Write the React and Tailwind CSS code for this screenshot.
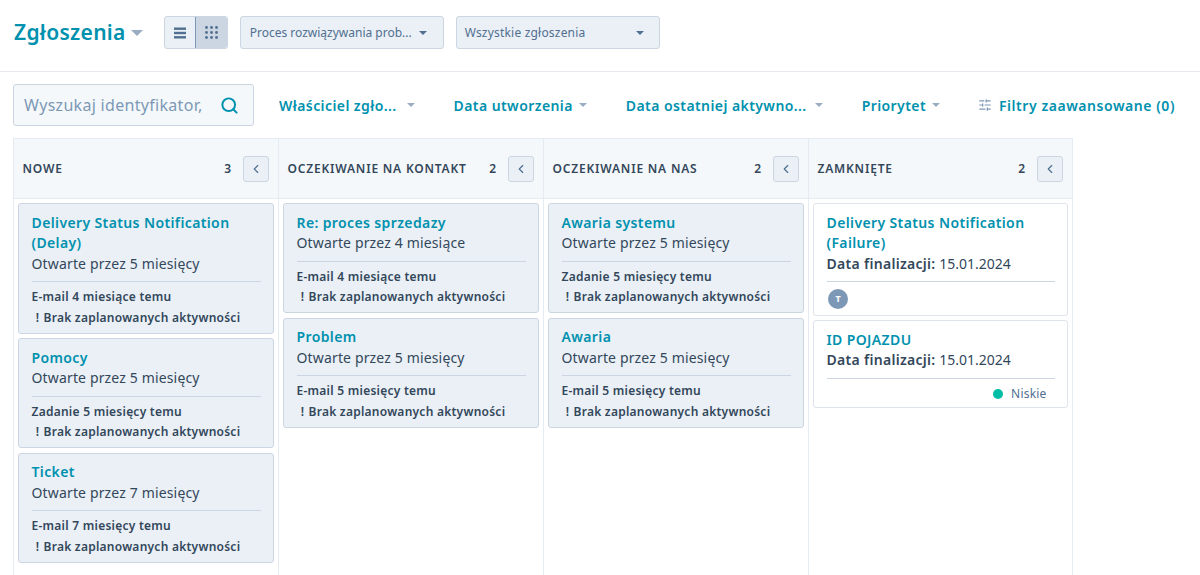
import { ChevronLeft, Search, SlidersHorizontal } from "lucide-react";

const font = { fontFamily: '"Noto Sans", sans-serif' };

const columns = [
  {
    name: "NOWE",
    count: 3,
    cards: [
      { title: ["Delivery Status Notification", "(Delay)"], open: "Otwarte przez 5 miesięcy", last: "E-mail 4 miesiące temu" },
      { title: ["Pomocy"], open: "Otwarte przez 5 miesięcy", last: "Zadanie 5 miesięcy temu" },
      { title: ["Ticket"], open: "Otwarte przez 7 miesięcy", last: "E-mail 7 miesięcy temu" },
    ],
  },
  {
    name: "OCZEKIWANIE NA KONTAKT",
    count: 2,
    cards: [
      { title: ["Re: proces sprzedazy"], open: "Otwarte przez 4 miesiące", last: "E-mail 4 miesiące temu" },
      { title: ["Problem"], open: "Otwarte przez 5 miesięcy", last: "E-mail 5 miesięcy temu" },
    ],
  },
  {
    name: "OCZEKIWANIE NA NAS",
    count: 2,
    cards: [
      { title: ["Awaria systemu"], open: "Otwarte przez 5 miesięcy", last: "Zadanie 5 miesięcy temu" },
      { title: ["Awaria"], open: "Otwarte przez 5 miesięcy", last: "E-mail 5 miesięcy temu" },
    ],
  },
];

function Caret({ className }) {
  return <span className={"inline-block w-0 h-0 border-x-[4.5px] border-x-transparent border-t-[4.5px] " + className} />;
}

function Filter({ label, className, gap }) {
  return (
    <div className={"flex items-center text-[14px] font-semibold tracking-[0.42px] text-[#0091ae] " + className}>
      <span className={"whitespace-nowrap " + gap}>{label}</span>
      <Caret className="border-t-[#99acc2]" />
    </div>
  );
}

function ColumnHeader({ name, count }) {
  return (
    <div className="h-[60px] flex items-center bg-[#f5f8fa] border-b border-[#e5ebf2] pl-[8.5px] pr-[9px]">
      <span className="text-[12px] font-semibold text-[#33475b] tracking-[0.8px] whitespace-nowrap">{name}</span>
      <span className="ml-auto text-[12px] font-semibold text-[#33475b]">{count}</span>
      <button className="ml-[12px] w-[26px] h-[26px] flex items-center justify-center rounded-[3px] bg-[#eaf0f6] border border-[#cbd6e2] text-[#516f90]">
        <ChevronLeft size={14} strokeWidth={2} />
      </button>
    </div>
  );
}

function OpenCard({ card }) {
  return (
    <div className="bg-[#eaf0f6] border border-[#cbd6e2] rounded-[3px] px-[12.5px] pt-[8.5px] pb-[4.5px]">
      {card.title.map((t) => (
        <div key={t} className="text-[14px] leading-[20.5px] font-semibold tracking-[0.38px] text-[#0091ae]">{t}</div>
      ))}
      <div className="text-[14px] leading-[20.5px] tracking-[0.15px] text-[#33475b]">{card.open}</div>
      <div className="border-t border-[#cbd6e2] mt-[7px] pt-[5px] text-[12px] font-semibold tracking-[0.25px] text-[#33475b]">
        <div className="leading-[20.5px]">{card.last}</div>
        <div className="leading-[20.5px] flex">
          <span className="w-[12px] text-center">!</span>
          <span>Brak zaplanowanych aktywności</span>
        </div>
      </div>
    </div>
  );
}

function ClosedCard({ title, children }) {
  return (
    <div className="bg-white border border-[#dfe3eb] rounded-[3px] px-[12.5px] pt-[8.5px]">
      {title.map((t) => (
        <div key={t} className="text-[14px] leading-[20.5px] font-semibold tracking-[0.38px] text-[#0091ae]">{t}</div>
      ))}
      <div className="text-[14px] leading-[20.5px] text-[#33475b]">
        <span className="font-semibold tracking-[0.3px]">Data finalizacji:</span> 15.01.2024
      </div>
      <div className="border-t border-[#cbd6e2] mt-[7px]">{children}</div>
    </div>
  );
}

export default function App() {
  return (
    <div className="w-[1200px] h-[575px] overflow-hidden bg-white" style={font}>
      <div className="h-[72px] border-b border-[#e5e8ed] flex items-start pt-[16px] pl-[14px]">
        <div className="h-[33px] flex items-center">
          <span className="text-[21px] font-semibold text-[#0091ae] tracking-[0.3px]">Zgłoszenia</span>
          <Caret className="ml-[5px] !border-x-[6px] !border-t-[6px] border-t-[#99acc2]" />
        </div>
        <div className="ml-[21px] flex h-[33px] rounded-[3px] border border-[#cbd6e2] bg-[#eaf0f6]">
          <div className="w-[30px] flex items-center justify-center">
            <svg width="12" height="12" viewBox="0 0 12 12" fill="#516f90">
              <rect x="0" y="0.5" width="12" height="2.4" />
              <rect x="0" y="4.8" width="12" height="2.4" />
              <rect x="0" y="9.1" width="12" height="2.4" />
            </svg>
          </div>
          <div className="w-[32px] flex items-center justify-center bg-[#cbd6e2] border-l border-[#7c98b6] rounded-r-[3px]">
            <svg width="13" height="13" viewBox="0 0 13 13" fill="#516f90">
              {[1.5, 6.5, 11.5].flatMap((y) =>
                [1.5, 6.5, 11.5].map((x) => <circle key={x + "-" + y} cx={x} cy={y} r="1.4" />)
              )}
            </svg>
          </div>
        </div>
        <div className="ml-[12px] w-[204px] h-[33px] flex items-center justify-between pl-[9px] pr-[16px] rounded-[3px] border border-[#cbd6e2] bg-[#eaf0f6] text-[12px] text-[#516f90]">
          <span className="whitespace-nowrap">Proces rozwiązywania prob...</span>
          <Caret className="border-t-[#516f90]" />
        </div>
        <div className="ml-[12px] w-[204px] h-[33px] flex items-center justify-between pl-[8px] pr-[15px] rounded-[3px] border border-[#cbd6e2] bg-[#eaf0f6] text-[12px] tracking-[0.2px] text-[#516f90]">
          <span>Wszystkie zgłoszenia</span>
          <Caret className="border-t-[#516f90]" />
        </div>
      </div>

      <div className="h-[66px] flex items-center pl-[13px]">
        <div className="w-[241px] h-[42px] flex items-center justify-between pl-[10px] pr-[14px] rounded-[3px] border border-[#cbd6e2] bg-[#f5f8fa]">
          <span className="text-[16px] tracking-[0.3px] text-[#7c98b6] whitespace-nowrap">Wyszukaj identyfikator,</span>
          <Search size={19} strokeWidth={2.5} className="text-[#0091ae]" />
        </div>
        <Filter label="Właściciel zgło..." gap="mr-[10px]" className="ml-[25px]" />
        <Filter label="Data utworzenia" gap="mr-[6px]" className="ml-[39px]" />
        <Filter label="Data ostatniej aktywno..." gap="mr-[8px]" className="ml-[39px]" />
        <Filter label="Priorytet" gap="mr-[6px]" className="ml-[39px]" />
        <div className="ml-[38px] flex items-center gap-[7px] text-[14px] font-semibold tracking-[0.55px] text-[#0091ae] whitespace-nowrap">
          <SlidersHorizontal size={14} className="text-[#7c98b6]" />
          Filtry zaawansowane (0)
        </div>
      </div>

      <div className="ml-[13px] w-[1060px] h-[437px] flex border-x border-t border-[#e5ebf2]">
        {columns.map((col) => (
          <div key={col.name} className="w-[265px] shrink-0 border-r border-[#e5ebf2]">
            <ColumnHeader name={col.name} count={col.count} />
            <div className="pt-[4px] px-[4px] flex flex-col gap-[4.5px]">
              {col.cards.map((card) => (
                <OpenCard key={card.title[0]} card={card} />
              ))}
            </div>
          </div>
        ))}
        <div className="flex-1">
          <ColumnHeader name="ZAMKNIĘTE" count={2} />
          <div className="pt-[4px] px-[4px] flex flex-col gap-[4px]">
            <ClosedCard title={["Delivery Status Notification", "(Failure)"]}>
              <div className="h-[33px] flex items-center pl-[1.5px]">
                <span className="w-[20px] h-[20px] rounded-full bg-[#7c98b6] text-white text-[9px] font-bold flex items-center justify-center">T</span>
              </div>
            </ClosedCard>
            <ClosedCard title={["ID POJAZDU"]}>
              <div className="h-[28.5px] pt-[3px] flex items-center justify-end pr-[8px] gap-[8px] text-[12px] tracking-[0.2px] text-[#516f90]">
                <span className="w-[10px] h-[10px] rounded-full bg-[#00bda5]" />
                Niskie
              </div>
            </ClosedCard>
          </div>
        </div>
      </div>
    </div>
  );
}
